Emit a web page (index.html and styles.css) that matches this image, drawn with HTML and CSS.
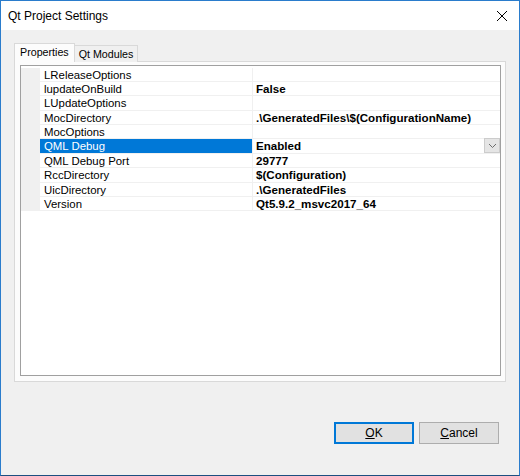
FILE: index.html
```html
<!DOCTYPE html>
<html>
<head>
<meta charset="utf-8">
<link rel="stylesheet" href="styles.css">
</head>
<body>
<div class="window">
  <div class="titlebar">
    <span class="title">Qt Project Settings</span>
    <svg class="close" width="12" height="12" viewBox="0 0 12 12"><path d="M1 1 L11 11 M11 1 L1 11" stroke="#000" stroke-width="1" fill="none"/></svg>
  </div>
  <div class="content">
    <div class="tabs">
      <div class="tab active">Properties</div>
      <div class="tab">Qt Modules</div>
    </div>
    <div class="panel">
      <div class="grid">
        <div class="row"><div class="gutter"></div><div class="name">LReleaseOptions</div><div class="value"></div></div>
        <div class="row"><div class="gutter"></div><div class="name">lupdateOnBuild</div><div class="value">False</div></div>
        <div class="row"><div class="gutter"></div><div class="name">LUpdateOptions</div><div class="value"></div></div>
        <div class="row"><div class="gutter"></div><div class="name">MocDirectory</div><div class="value">.\GeneratedFiles\$(ConfigurationName)</div></div>
        <div class="row"><div class="gutter"></div><div class="name">MocOptions</div><div class="value"></div></div>
        <div class="row selected"><div class="gutter"></div><div class="name">QML Debug</div><div class="value">Enabled<span class="drop"><svg width="9" height="6" viewBox="0 0 9 6"><path d="M1 1 L4.5 4.5 L8 1" stroke="#6d6d6d" fill="none" stroke-width="1"/></svg></span></div></div>
        <div class="row"><div class="gutter"></div><div class="name">QML Debug Port</div><div class="value">29777</div></div>
        <div class="row"><div class="gutter"></div><div class="name">RccDirectory</div><div class="value">$(Configuration)</div></div>
        <div class="row"><div class="gutter"></div><div class="name">UicDirectory</div><div class="value">.\GeneratedFiles</div></div>
        <div class="row"><div class="gutter"></div><div class="name">Version</div><div class="value">Qt5.9.2_msvc2017_64</div></div>
      </div>
    </div>
    <div class="buttons">
      <button class="btn default"><u>O</u>K</button>
      <button class="btn"><u>C</u>ancel</button>
    </div>
  </div>
</div>
</body>
</html>
```
FILE: styles.css
```css
html, body {
  margin: 0;
  padding: 0;
  background: #f0f0f0;
}
.window {
  width: 520px;
  height: 476px;
  box-sizing: border-box;
  border: 1px solid #2a7ccc;
  border-bottom-color: #1d4f80;
  display: flex;
  flex-direction: column;
  background: #f0f0f0;
  font-family: "Liberation Sans", Arial, sans-serif;
  color: #000;
}
.titlebar {
  height: 29px;
  background: #fff;
  display: flex;
  align-items: center;
  justify-content: space-between;
  padding: 0 11px 0 7px;
}
.title {
  font-size: 12px;
  margin-top: 1px;
}
.close {
  display: block;
}
.content {
  flex: 1;
  display: flex;
  flex-direction: column;
  padding: 13px 13px 0 13px;
}
.tabs {
  display: flex;
  align-items: flex-end;
  height: 19px;
  position: relative;
  z-index: 1;
  margin-bottom: -1px;
}
.tab {
  box-sizing: border-box;
  height: 17px;
  border: 1px solid #d9d9d9;
  border-bottom: none;
  background: #f0f0f0;
  font-size: 10.7px;
  padding: 0 4px;
  line-height: 16px;
}
.tab.active {
  height: 19px;
  background: #fcfcfc;
  padding: 0 5px 0 5px;
  line-height: 16px;
}
.tab + .tab {
  border-left: none;
}
.panel {
  box-sizing: border-box;
  height: 321px;
  border: 1px solid #d9d9d9;
  background: #fcfcfc;
  padding: 3px 4px 5px 5px;
}
.grid {
  box-sizing: border-box;
  height: 311px;
  border: 1px solid #a0a0a0;
  background: #fff;
  padding-top: 1.5px;
}
.row {
  display: flex;
  height: 14.4px;
  font-size: 11.4px;
  line-height: 14px;
}
.gutter {
  width: 19px;
  flex: none;
  background: #f0f0f0;
}
.name {
  width: 208px;
  flex: none;
  padding-left: 4px;
  border-bottom: 1px solid #f0f0f0;
  border-right: 1px solid #f0f0f0;
  height: 13.4px;
  white-space: nowrap;
}
.value {
  flex: 1;
  padding-left: 3px;
  font-weight: bold;
  font-size: 11.6px;
  border-bottom: 1px solid #f0f0f0;
  height: 13.4px;
  white-space: nowrap;
  position: relative;
}
.selected .name {
  background: #0078d7;
  color: #fff;
}
.drop {
  position: absolute;
  right: 0;
  top: -1px;
  width: 14px;
  height: 13px;
  border: 1px solid #cccccc;
  background: #e5e5e5;
  display: flex;
  align-items: center;
  justify-content: center;
}
.drop svg {
  display: block;
}
.buttons {
  display: flex;
  justify-content: flex-end;
  gap: 5px;
  padding-right: 7px;
  margin-top: 40px;
}
.btn {
  box-sizing: border-box;
  width: 80px;
  height: 22px;
  font-family: "Liberation Sans", Arial, sans-serif;
  font-size: 12px;
  background: #e1e1e1;
  border: 1px solid #adadad;
  padding: 0;
  color: #000;
}
.btn.default {
  border: 1px solid #0078d7;
  box-shadow: inset 0 0 0 1px #0078d7;
}
```
